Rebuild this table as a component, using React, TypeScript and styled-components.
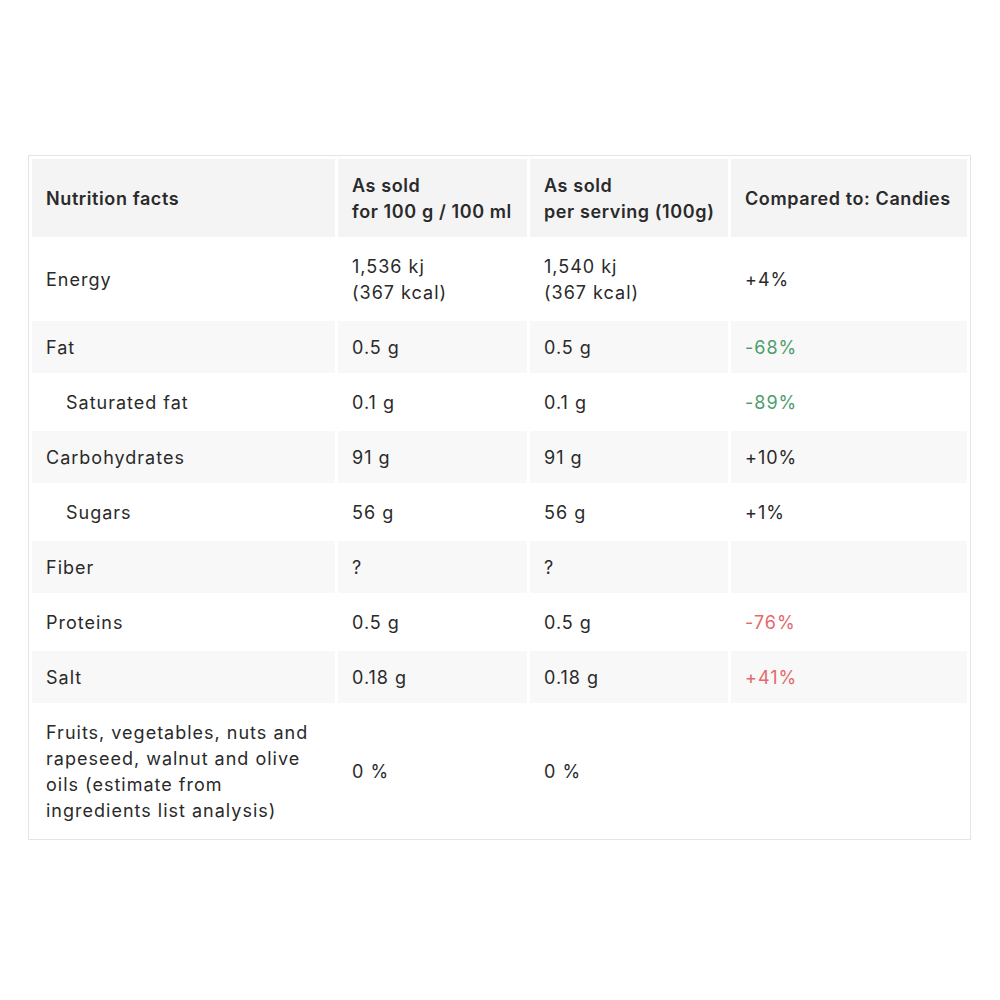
import React from 'react';
import styled, { createGlobalStyle } from 'styled-components';

const TEXT_COLOR = '#2a2a2a';
const HEAD_BG = '#f4f4f4';
const STRIPE_BG = '#f8f8f8';
const GOOD = '#4e9d6c';
const BAD = '#e26a6a';

type Tone = 'good' | 'bad' | undefined;

type Row = {
  label: string;
  sub?: boolean;
  sold: React.ReactNode;
  serving: React.ReactNode;
  compared?: string;
  tone?: Tone;
};

const rows: Row[] = [
  {
    label: 'Energy',
    sold: (
      <>
        1,536 kj
        <br />
        (367 kcal)
      </>
    ),
    serving: (
      <>
        1,540 kj
        <br />
        (367 kcal)
      </>
    ),
    compared: '+4%',
  },
  { label: 'Fat', sold: '0.5 g', serving: '0.5 g', compared: '-68%', tone: 'good' },
  { label: 'Saturated fat', sub: true, sold: '0.1 g', serving: '0.1 g', compared: '-89%', tone: 'good' },
  { label: 'Carbohydrates', sold: '91 g', serving: '91 g', compared: '+10%' },
  { label: 'Sugars', sub: true, sold: '56 g', serving: '56 g', compared: '+1%' },
  { label: 'Fiber', sold: '?', serving: '?' },
  { label: 'Proteins', sold: '0.5 g', serving: '0.5 g', compared: '-76%', tone: 'bad' },
  { label: 'Salt', sold: '0.18 g', serving: '0.18 g', compared: '+41%', tone: 'bad' },
  {
    label: 'Fruits, vegetables, nuts and rapeseed, walnut and olive oils (estimate from ingredients list analysis)',
    sold: '0 %',
    serving: '0 %',
  },
];

export default function App() {
  return (
    <>
      <GlobalStyle />
      <Page>
        <Table>
          <colgroup>
            <col style={{ width: 303 }} />
            <col style={{ width: 189 }} />
            <col style={{ width: 198 }} />
            <col style={{ width: 236 }} />
          </colgroup>
          <thead>
            <tr>
              <HeadCell>Nutrition facts</HeadCell>
              <HeadCell>
                As sold
                <br />
                for 100 g / 100 ml
              </HeadCell>
              <HeadCell>
                As sold
                <br />
                per serving (100g)
              </HeadCell>
              <HeadCell>Compared to: Candies</HeadCell>
            </tr>
          </thead>
          <tbody>
            {rows.map((row, i) => (
              <BodyRow key={row.label} $striped={i % 2 === 1}>
                <LabelCell $sub={row.sub}>{row.label}</LabelCell>
                <Cell>{row.sold}</Cell>
                <Cell>{row.serving}</Cell>
                <Cell $tone={row.tone}>{row.compared}</Cell>
              </BodyRow>
            ))}
          </tbody>
        </Table>
      </Page>
    </>
  );
}

const GlobalStyle = createGlobalStyle`
  html, body {
    margin: 0;
    background: #ffffff;
  }
  body {
    font-family: Inter, "Noto Sans", sans-serif;
    color: ${TEXT_COLOR};
  }
`;

const Page = styled.div`
  padding: 155px 0 0 28px;
`;

const Table = styled.table`
  width: 941px;
  table-layout: fixed;
  border-collapse: separate;
  border-spacing: 3px;
  border: 1.5px solid #e4e4e4;
  font-size: 18px;
  line-height: 26px;
`;

const HeadCell = styled.th`
  background: ${HEAD_BG};
  text-align: left;
  font-weight: 600;
  padding: 14px 14px 12px;
  vertical-align: middle;
  letter-spacing: 0.6px;
  white-space: nowrap;
`;

const BodyRow = styled.tr<{ $striped: boolean }>`
  background: ${(p) => (p.$striped ? STRIPE_BG : '#ffffff')};
`;

const Cell = styled.td<{ $tone?: Tone }>`
  padding: 14px 14px 12px;
  vertical-align: middle;
  font-weight: 400;
  letter-spacing: 1px;
  color: ${(p) => (p.$tone === 'good' ? GOOD : p.$tone === 'bad' ? BAD : TEXT_COLOR)};
`;

const LabelCell = styled(Cell)<{ $sub?: boolean }>`
  padding-left: ${(p) => (p.$sub ? 34 : 14)}px;
`;
